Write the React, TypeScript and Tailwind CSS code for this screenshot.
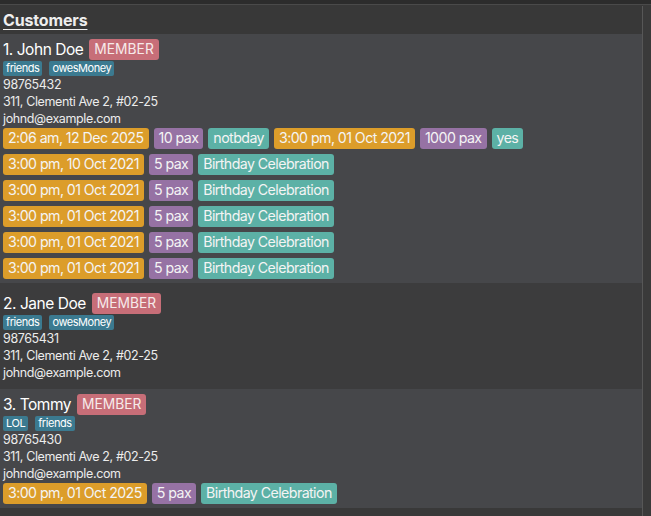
const font = { fontFamily: "Inter, 'Noto Sans', sans-serif" }

type Booking = { time: string; pax: string; note: string }

type Customer = {
  name: string
  tags: string[]
  phone: string
  address: string
  email: string
  bookings: Booking[][]
  bg: string
  pad: string
}

const customers: Customer[] = [
  {
    name: "1. John Doe",
    tags: ["friends", "owesMoney"],
    phone: "98765432",
    address: "311, Clementi Ave 2, #02-25",
    email: "johnd@example.com",
    bookings: [
      [
        { time: "2:06 am, 12 Dec 2025", pax: "10 pax", note: "notbday" },
        { time: "3:00 pm, 01 Oct 2021", pax: "1000 pax", note: "yes" },
      ],
      [{ time: "3:00 pm, 10 Oct 2021", pax: "5 pax", note: "Birthday Celebration" }],
      [{ time: "3:00 pm, 01 Oct 2021", pax: "5 pax", note: "Birthday Celebration" }],
      [{ time: "3:00 pm, 01 Oct 2021", pax: "5 pax", note: "Birthday Celebration" }],
      [{ time: "3:00 pm, 01 Oct 2021", pax: "5 pax", note: "Birthday Celebration" }],
      [{ time: "3:00 pm, 01 Oct 2021", pax: "5 pax", note: "Birthday Celebration" }],
    ],
    bg: "bg-[#46474a]",
    pad: "pt-[5px] pb-[4px]",
  },
  {
    name: "2. Jane Doe",
    tags: ["friends", "owesMoney"],
    phone: "98765431",
    address: "311, Clementi Ave 2, #02-25",
    email: "johnd@example.com",
    bookings: [],
    bg: "bg-[#3c3c3d]",
    pad: "pt-[10px] pb-[8px]",
  },
  {
    name: "3. Tommy",
    tags: ["LOL", "friends"],
    phone: "98765430",
    address: "311, Clementi Ave 2, #02-25",
    email: "johnd@example.com",
    bookings: [[{ time: "3:00 pm, 01 Oct 2025", pax: "5 pax", note: "Birthday Celebration" }]],
    bg: "bg-[#46474a]",
    pad: "pt-[5px] pb-[4px]",
  },
]

function Chip({ text, color }: { text: string; color: string }) {
  return (
    <span className={`${color} rounded-[3px] px-[5px] h-[21px] flex items-center text-[14.2px] tracking-[-0.04em] text-[#f4f4f4] leading-none`}>
      {text}
    </span>
  )
}

function CustomerCard({ c }: { c: Customer }) {
  return (
    <div className={`${c.bg} ${c.pad} pl-[3px]`}>
      <div className="flex items-center gap-[6px] h-[21px]">
        <span className="text-[15.5px] tracking-[-0.03em] text-white leading-none">{c.name}</span>
        <span className="bg-[#c76e78] rounded-[3px] px-[5px] h-[21px] flex items-center text-[13.8px] text-[#f6eaea] leading-none">
          MEMBER
        </span>
      </div>
      <div className="flex gap-[7px] mt-[1px]">
        {c.tags.map((t) => (
          <span key={t} className="bg-[#3b7a90] rounded-[2px] px-[3px] h-[15px] flex items-center text-[11px] tracking-[-0.04em] text-white leading-none">
            {t}
          </span>
        ))}
      </div>
      <div className="text-[12.5px] tracking-[-0.03em] text-[#ececec] leading-[17px]">
        <div>{c.phone}</div>
        <div>{c.address}</div>
        <div>{c.email}</div>
      </div>
      {c.bookings.length > 0 && (
        <div className="flex flex-col gap-[5px] mt-[1px]">
          {c.bookings.map((row, i) => (
            <div key={i} className="flex gap-[5px]">
              {row.map((b, j) => (
                <div key={j} className="flex gap-[5px]">
                  <Chip text={b.time} color="bg-[#dc9d2a]" />
                  <Chip text={b.pax} color="bg-[#9672a4]" />
                  <Chip text={b.note} color="bg-[#5cb1a6]" />
                </div>
              ))}
            </div>
          ))}
        </div>
      )}
    </div>
  )
}

export default function App() {
  return (
    <div style={font} className="w-[651px] h-[516px] bg-[#393939] flex flex-col overflow-hidden">
      <div className="h-[5px] bg-[#2c2c2c] border-b border-[#4a4a4a] shrink-0" />
      <div className="flex flex-1 min-h-0">
        <div className="w-[642px] flex flex-col">
          <div className="h-[29px] bg-[#383838] pl-[3px] flex items-center">
            <span className="text-[16px] font-bold tracking-[-0.01em] text-[#eeeeee] underline underline-offset-[3px] leading-none">
              Customers
            </span>
          </div>
          {customers.map((c) => (
            <CustomerCard key={c.name} c={c} />
          ))}
        </div>
        <div className="w-px bg-[#575757] mt-[1px]" />
        <div className="flex-1 bg-[#3a3a3a]" />
      </div>
    </div>
  )
}
